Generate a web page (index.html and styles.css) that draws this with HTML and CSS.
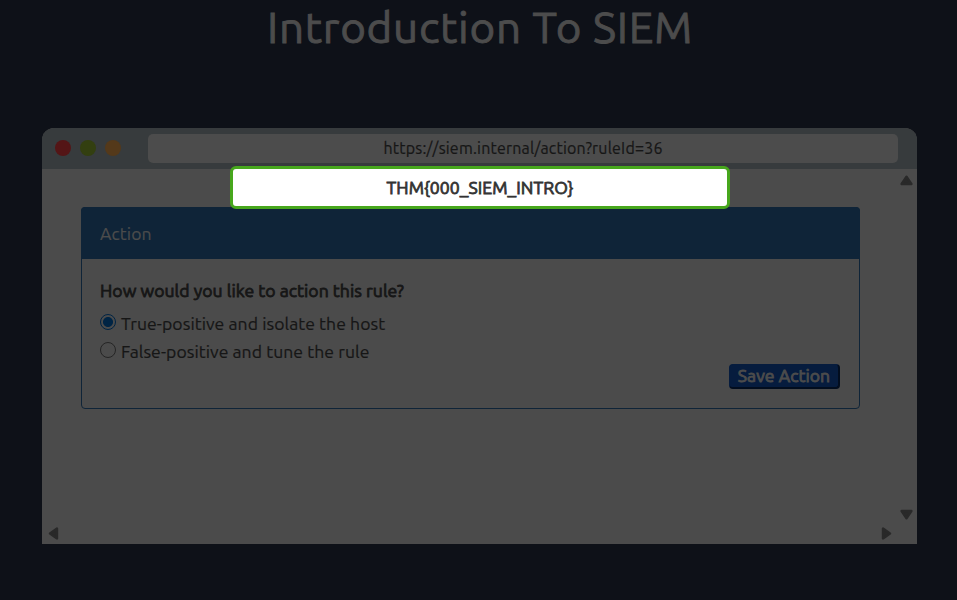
FILE: index.html
```
<!DOCTYPE html>
<html lang="en">
<head>
<meta charset="utf-8">
<title>Introduction To SIEM</title>
<link rel="stylesheet" href="styles.css">
</head>
<body>
<h1 class="title"><span>Introduction To SIEM</span></h1>
<main class="window">
  <header class="toolbar">
    <i class="dot red"></i><i class="dot green"></i><i class="dot orange"></i>
    <div class="address"><span>https://siem.internal/action?ruleId=36</span></div>
  </header>
  <div class="viewport">
    <section class="card">
      <h2 class="card-header"><span>Action</span></h2>
      <form class="card-body">
        <p class="question"><span>How would you like to action this rule?</span></p>
        <label class="option"><i class="radio checked"></i><span>True-positive and isolate the host</span></label>
        <label class="option"><i class="radio"></i><span>False-positive and tune the rule</span></label>
        <button type="button" class="save"><span>Save Action</span></button>
      </form>
    </section>
    <div class="vbar">
      <svg width="13" height="11" viewBox="0 0 13 11"><path d="M6.5 1.7 1.6 9h9.8z"/></svg>
      <svg width="13" height="11" viewBox="0 0 13 11"><path d="M6.5 9.3 1.6 2h9.8z"/></svg>
    </div>
  </div>
  <div class="hbar">
    <svg width="11" height="13" viewBox="0 0 11 13"><path d="M2 6.5 9 1.6v9.8z"/></svg>
    <svg width="11" height="13" viewBox="0 0 11 13"><path d="M9 6.5 2 1.6v9.8z"/></svg>
  </div>
</main>
<div class="flag" role="dialog"><span>THM{000_SIEM_INTRO}</span></div>
</body>
</html>
```
FILE: styles.css
```
* { box-sizing: border-box; }
body {
  margin: 0;
  height: 600px;
  overflow: hidden;
  background: #0e1118;
  color: #161616;
  font-family: Ubuntu, "Noto Sans", sans-serif;
  font-size: 17.6px;
}
h1, h2, p { margin: 0; font-weight: 400; }
span { white-space: nowrap; }
.title {
  height: 128px;
  padding-left: 3px;
  text-align: center;
  color: #4c4c4c;
  font-size: 44px;
  line-height: 54px;
  letter-spacing: 0.72px;
  -webkit-text-stroke: 0.9px #4c4c4c;
}
.window {
  width: 875px;
  height: 416px;
  margin-left: 42px;
  display: flex;
  flex-direction: column;
  background: #4b4b4b;
  border-radius: 12px 12px 0 0;
  overflow: hidden;
}
.toolbar {
  height: 41px;
  flex: none;
  display: flex;
  align-items: center;
  gap: 9px;
  padding: 0 19px 0 13px;
  background: #373b3d;
}
.dot { width: 16px; height: 16px; border-radius: 50%; margin-top: -1px; }
.red { background: #541516; }
.green { background: #333f10; }
.orange { background: #54391a; }
.address {
  flex: 1;
  height: 29px;
  margin-left: 18px;
  background: #4c4c4c;
  border-radius: 5px;
  text-align: center;
  font-size: 16px;
  line-height: 29px;
  letter-spacing: 0.2px;
  -webkit-text-stroke: 0.2px #161616;
}
.viewport { flex: 1; display: flex; justify-content: space-between; padding-left: 39px; }
.card {
  width: 779px;
  height: 202px;
  margin-top: 38px;
  border: 1px solid #0f2438;
  border-radius: 4px;
}
.card-header {
  height: 52px;
  margin: -1px -1px 0;
  padding-left: 19px;
  background: #0f2438;
  border-radius: 4px 4px 0 0;
  color: #4c4c4c;
  font-size: 17.6px;
  line-height: 53px;
  letter-spacing: 0.1px;
  -webkit-text-stroke: 0.2px #4c4c4c;
}
.card-body { display: flex; flex-direction: column; padding: 18px 19px 0 18px; }
.question { height: 32px; line-height: 28px; letter-spacing: 0.06px; -webkit-text-stroke: 0.8px #161616; }
.option {
  display: flex;
  height: 28px;
  line-height: 29px;
  gap: 5px;
  letter-spacing: 0.06px;
  -webkit-text-stroke: 0.2px #161616;
}
.radio {
  width: 16px;
  height: 16px;
  margin-top: 5px;
  border: 1px solid #252525;
  border-radius: 50%;
}
.checked { border: 1.5px solid #002444; background: radial-gradient(circle, #002444 4.6px, #4b4b4b 5.4px); }
.save {
  align-self: flex-end;
  width: 111px;
  height: 25px;
  margin-top: -1px;
  padding: 0;
  border: solid;
  border-width: 1px 2px 2px 1px;
  border-color: #061c3e #020d1e #020d1e #061c3e;
  border-radius: 4px;
  background: #061c3e;
  color: #4c4c4c;
  font: 400 17.6px/22px Ubuntu, "Noto Sans", sans-serif;
  letter-spacing: 0.06px;
  -webkit-text-stroke: 0.9px #4c4c4c;
}
.vbar {
  width: 20px;
  display: flex;
  flex-direction: column;
  justify-content: space-between;
  padding: 6px 0 4px 3px;
}
.hbar { height: 20px; flex: none; display: flex; justify-content: space-between; padding: 3px 25px 0 6px; }
svg { fill: #292929; stroke: #292929; stroke-width: 2.4; stroke-linejoin: round; }
.flag {
  position: absolute;
  left: 230px;
  top: 166px;
  width: 500px;
  height: 43px;
  border: 3px solid #47a71d;
  border-radius: 6px;
  background: #fff;
  color: #333;
  text-align: center;
  line-height: 37px;
  letter-spacing: 0.06px;
  -webkit-text-stroke: 0.8px #333;
}
```
